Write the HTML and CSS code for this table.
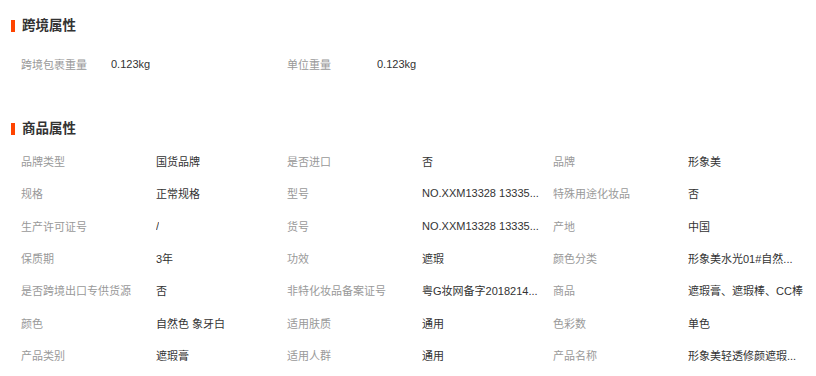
FILE: index.html
```html
<!DOCTYPE html>
<html lang="zh">
<head>
<meta charset="utf-8">
<title>属性</title>
<link rel="stylesheet" href="styles.css">
</head>
<body>
<section class="section first">
  <h2 class="title">跨境属性</h2>
  <div class="attrs short">
    <div class="item"><span class="label">跨境包裹重量</span><span class="value">0.123kg</span></div>
    <div class="item"><span class="label">单位重量</span><span class="value">0.123kg</span></div>
  </div>
</section>
<section class="section second">
  <h2 class="title">商品属性</h2>
  <div class="attrs long">
    <div class="item"><span class="label">品牌类型</span><span class="value">国货品牌</span></div>
    <div class="item"><span class="label">是否进口</span><span class="value">否</span></div>
    <div class="item"><span class="label">品牌</span><span class="value">形象美</span></div>
    <div class="item"><span class="label">规格</span><span class="value">正常规格</span></div>
    <div class="item"><span class="label">型号</span><span class="value">NO.XXM13328 13335...</span></div>
    <div class="item"><span class="label">特殊用途化妆品</span><span class="value">否</span></div>
    <div class="item"><span class="label">生产许可证号</span><span class="value">/</span></div>
    <div class="item"><span class="label">货号</span><span class="value">NO.XXM13328 13335...</span></div>
    <div class="item"><span class="label">产地</span><span class="value">中国</span></div>
    <div class="item"><span class="label">保质期</span><span class="value">3年</span></div>
    <div class="item"><span class="label">功效</span><span class="value">遮瑕</span></div>
    <div class="item"><span class="label">颜色分类</span><span class="value">形象美水光01#自然...</span></div>
    <div class="item"><span class="label">是否跨境出口专供货源</span><span class="value">否</span></div>
    <div class="item"><span class="label">非特化妆品备案证号</span><span class="value">粤G妆网备字2018214...</span></div>
    <div class="item"><span class="label">商品</span><span class="value">遮瑕膏、遮瑕棒、CC棒</span></div>
    <div class="item"><span class="label">颜色</span><span class="value">自然色 象牙白</span></div>
    <div class="item"><span class="label">适用肤质</span><span class="value">通用</span></div>
    <div class="item"><span class="label">色彩数</span><span class="value">单色</span></div>
    <div class="item"><span class="label">产品类别</span><span class="value">遮瑕膏</span></div>
    <div class="item"><span class="label">适用人群</span><span class="value">通用</span></div>
    <div class="item"><span class="label">产品名称</span><span class="value">形象美轻透修颜遮瑕...</span></div>
  </div>
</section>
</body>
</html>
```

FILE: styles.css
```css
html, body {
  margin: 0;
  padding: 0;
  background: #ffffff;
}
body {
  width: 816px;
  height: 376px;
  overflow: hidden;
  font-family: "Liberation Sans", "Noto Sans CJK SC", sans-serif;
  font-size: 11px;
  color: #333333;
}
.section {
  padding-left: 11px;
}
.first {
  padding-top: 16px;
}
.second {
  margin-top: 39px;
}
.title {
  display: flex;
  align-items: center;
  gap: 7px;
  margin: 0;
  height: 20px;
  line-height: 20px;
  font-size: 13.5px;
  font-weight: bold;
  color: #333333;
}
.title::before {
  content: "";
  display: block;
  width: 4px;
  height: 12px;
  background: #ff4400;
}
.attrs {
  display: grid;
  grid-template-columns: repeat(3, 266px);
  padding-left: 10px;
}
.first .attrs {
  margin-top: 12px;
}
.second .attrs {
  margin-top: 6px;
}
.item {
  display: flex;
  align-items: center;
  height: 32px;
  white-space: nowrap;
}
.long .item {
  height: 32.33px;
}
.label {
  color: #999999;
  flex: none;
}
.short .label {
  width: 90px;
}
.long .label {
  width: 135px;
}
.value {
  color: #333333;
  max-width: 124px;
  overflow: hidden;
  text-overflow: ellipsis;
}
```
